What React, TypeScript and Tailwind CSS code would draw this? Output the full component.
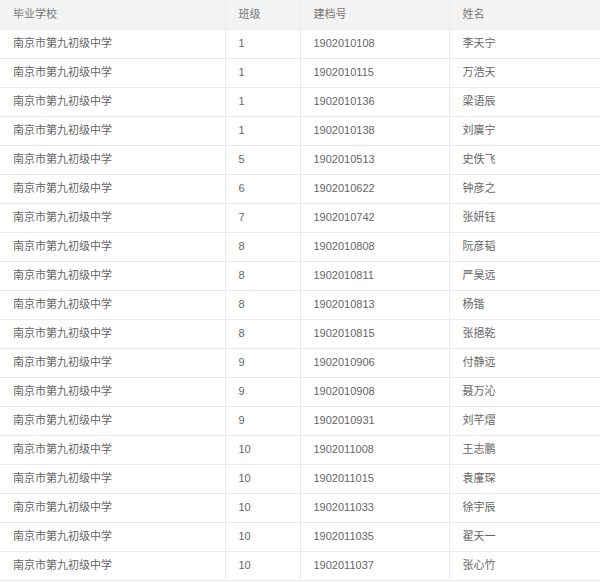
import React from "react";

const rows: [string, string, string][] = [
  ["1", "1902010108", "李天宁"],
  ["1", "1902010115", "万浩天"],
  ["1", "1902010136", "梁语辰"],
  ["1", "1902010138", "刘廙宁"],
  ["5", "1902010513", "史佚飞"],
  ["6", "1902010622", "钟彦之"],
  ["7", "1902010742", "张妍钰"],
  ["8", "1902010808", "阮彦韬"],
  ["8", "1902010811", "严昊远"],
  ["8", "1902010813", "杨锴"],
  ["8", "1902010815", "张挹乾"],
  ["9", "1902010906", "付静远"],
  ["9", "1902010908", "聂万沁"],
  ["9", "1902010931", "刘芊熠"],
  ["10", "1902011008", "王志鹏"],
  ["10", "1902011015", "袁廑琛"],
  ["10", "1902011033", "徐宇辰"],
  ["10", "1902011035", "翟天一"],
  ["10", "1902011037", "张心竹"],
];

const cell = "h-[29px] border-b border-r border-[#e9e9ee] pl-[13px] align-middle";

export default function App() {
  return (
    <div
      className="w-[600px] h-[583px] bg-white text-[#666] text-[11px]"
      style={{ fontFamily: '"Liberation Sans", "Noto Sans CJK SC", sans-serif' }}
    >
      <table className="w-[600px] table-fixed border-collapse">
        <colgroup>
          <col className="w-[225px]" />
          <col className="w-[75px]" />
          <col className="w-[149px]" />
          <col className="w-[151px]" />
        </colgroup>
        <thead>
          <tr className="bg-[#f3f3f3] text-[#777]">
            <th className={`${cell} text-left font-normal`}>毕业学校</th>
            <th className={`${cell} text-left font-normal`}>班级</th>
            <th className={`${cell} text-left font-normal`}>建档号</th>
            <th className={`${cell} text-left font-normal border-r-0`}>姓名</th>
          </tr>
        </thead>
        <tbody>
          {rows.map((r, i) => (
            <tr key={i}>
              <td className={cell}>南京市第九初级中学</td>
              <td className={cell}>{r[0]}</td>
              <td className={cell}>{r[1]}</td>
              <td className={`${cell} border-r-0`}>{r[2]}</td>
            </tr>
          ))}
        </tbody>
      </table>
    </div>
  );
}
